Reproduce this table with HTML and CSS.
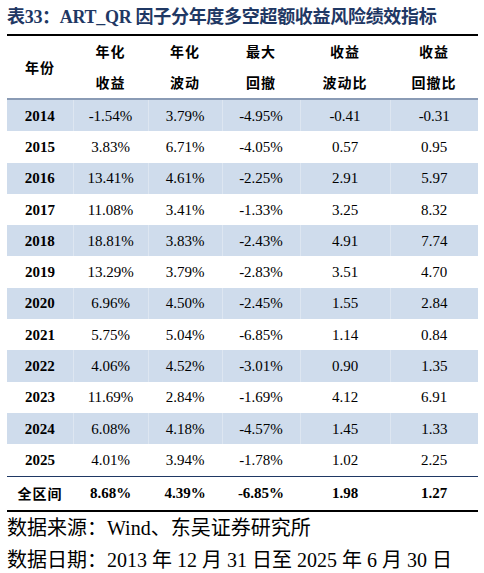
FILE: index.html
```html
<!DOCTYPE html>
<html lang="zh">
<head>
<meta charset="utf-8">
<link rel="stylesheet" href="styles.css">
</head>
<body>
<div class="page">
  <div class="title">表33：ART_QR 因子分年度多空超额收益风险绩效指标</div>
  <table class="tbl">
    <colgroup>
      <col style="width:66px"><col style="width:75px"><col style="width:74px"><col style="width:78px"><col style="width:90px"><col style="width:88px">
    </colgroup>
    <thead>
      <tr>
        <th class="yr">年份</th>
        <th><span>年化</span><span>收益</span></th>
        <th><span>年化</span><span>波动</span></th>
        <th><span>最大</span><span>回撤</span></th>
        <th><span>收益</span><span>波动比</span></th>
        <th><span>收益</span><span>回撤比</span></th>
      </tr>
    </thead>
    <tbody>
      <tr class="alt"><td class="y">2014</td><td>-1.54%</td><td>3.79%</td><td>-4.95%</td><td>-0.41</td><td>-0.31</td></tr>
      <tr><td class="y">2015</td><td>3.83%</td><td>6.71%</td><td>-4.05%</td><td>0.57</td><td>0.95</td></tr>
      <tr class="alt"><td class="y">2016</td><td>13.41%</td><td>4.61%</td><td>-2.25%</td><td>2.91</td><td>5.97</td></tr>
      <tr><td class="y">2017</td><td>11.08%</td><td>3.41%</td><td>-1.33%</td><td>3.25</td><td>8.32</td></tr>
      <tr class="alt"><td class="y">2018</td><td>18.81%</td><td>3.83%</td><td>-2.43%</td><td>4.91</td><td>7.74</td></tr>
      <tr><td class="y">2019</td><td>13.29%</td><td>3.79%</td><td>-2.83%</td><td>3.51</td><td>4.70</td></tr>
      <tr class="alt"><td class="y">2020</td><td>6.96%</td><td>4.50%</td><td>-2.45%</td><td>1.55</td><td>2.84</td></tr>
      <tr><td class="y">2021</td><td>5.75%</td><td>5.04%</td><td>-6.85%</td><td>1.14</td><td>0.84</td></tr>
      <tr class="alt"><td class="y">2022</td><td>4.06%</td><td>4.52%</td><td>-3.01%</td><td>0.90</td><td>1.35</td></tr>
      <tr><td class="y">2023</td><td>11.69%</td><td>2.84%</td><td>-1.69%</td><td>4.12</td><td>6.91</td></tr>
      <tr class="alt"><td class="y">2024</td><td>6.08%</td><td>4.18%</td><td>-4.57%</td><td>1.45</td><td>1.33</td></tr>
      <tr><td class="y">2025</td><td>4.01%</td><td>3.94%</td><td>-1.78%</td><td>1.02</td><td>2.25</td></tr>
      <tr class="total"><td class="cn">全区间</td><td>8.68%</td><td>4.39%</td><td>-6.85%</td><td>1.98</td><td>1.27</td></tr>
    </tbody>
  </table>
  <div class="note">数据来源：Wind、东吴证券研究所</div>
  <div class="note">数据日期：2013 年 12 月 31 日至 2025 年 6 月 30 日</div>
</div>
</body>
</html>
```

FILE: styles.css
```css
html, body {
  margin: 0;
  padding: 0;
  background: #ffffff;
}
.page {
  padding: 0 6px 0 7px;
  font-family: "Liberation Serif", "Noto Sans CJK SC", serif;
  color: #000;
}
.title {
  height: 34px;
  line-height: 34px;
  font-size: 18px;
  font-weight: bold;
  color: #1f3864;
  white-space: nowrap;
  letter-spacing: -0.3px;
}
.tbl {
  width: 471px;
  border-collapse: collapse;
  table-layout: fixed;
  border-top: 2.5px solid #000;
  border-bottom: 2.5px solid #000;
}
.tbl th {
  height: 61px;
  padding: 0;
  font-family: "Noto Sans CJK SC", sans-serif;
  font-size: 14px;
  font-weight: bold;
  text-align: center;
  vertical-align: middle;
  border-bottom: 2.5px solid #8a9bb5;
  letter-spacing: 1px;
}
.tbl th span {
  display: block;
  line-height: 31px;
}
.tbl td {
  height: 31.3px;
  padding: 0;
  font-size: 15px;
  text-align: center;
  vertical-align: middle;
  line-height: 18px;
}
.tbl td.y {
  font-weight: bold;
}
.tbl tr.alt td {
  background: #cfdcec;
  border-left: 1px solid #dde6f1;
}
.tbl tr.alt td:first-child {
  border-left: none;
}
.tbl tr.total td {
  height: 33px;
  font-weight: bold;
  border-top: 1.5px solid #1f3864;
}
.tbl td.cn {
  font-family: "Noto Sans CJK SC", sans-serif;
  font-size: 14px;
  letter-spacing: 1px;
}
.note {
  height: 32px;
  line-height: 32px;
  font-size: 20px;
  white-space: nowrap;
}
```
